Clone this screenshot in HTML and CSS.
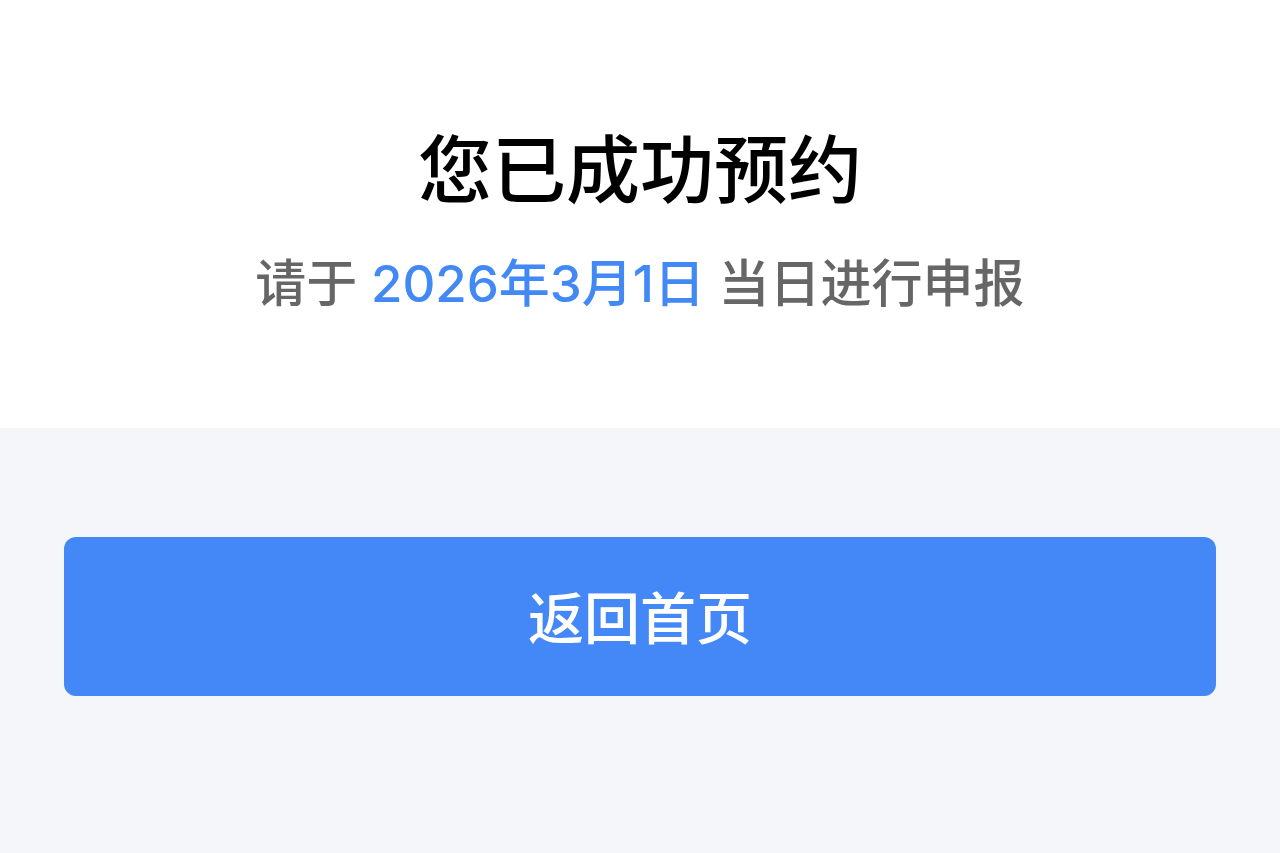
FILE: index.html
```html
<!DOCTYPE html>
<html lang="zh">
<head>
<meta charset="utf-8">
<link rel="stylesheet" href="styles.css">
</head>
<body>
<div class="page">
  <section class="result">
    <h1 class="title">您已成功预约</h1>
    <p class="desc">请于 <span class="date">2026年3月1日</span> 当日进行申报</p>
  </section>
  <section class="actions">
    <button class="btn">返回首页</button>
  </section>
</div>
</body>
</html>
```
FILE: styles.css
```css
html, body {
  margin: 0;
  padding: 0;
  height: 100%;
}
body {
  font-family: Inter, "Noto Sans CJK SC", sans-serif;
  background: #f5f6fa;
}
.page {
  display: flex;
  flex-direction: column;
  min-height: 100%;
}
.result {
  background: #ffffff;
  height: 428px;
  display: flex;
  flex-direction: column;
  align-items: center;
  box-sizing: border-box;
  padding-top: 117px;
}
.title {
  margin: 0;
  font-family: "Noto Sans CJK SC", sans-serif;
  font-size: 74px;
  font-weight: 500;
  line-height: 96px;
  color: #000;
}
.desc {
  margin: 41px 0 0;
  font-size: 51px;
  font-weight: 500;
  line-height: 60px;
  color: #666666;
}
.date {
  color: #4389f6;
}
.actions {
  padding: 109px 64px 0;
}
.btn {
  display: block;
  width: 100%;
  height: 159px;
  border: none;
  border-radius: 12px;
  background: #4388f6;
  color: #fff;
  font-family: "Noto Sans CJK SC", sans-serif;
  font-size: 56px;
  font-weight: 500;
  padding: 0 0 4px;
}
```
